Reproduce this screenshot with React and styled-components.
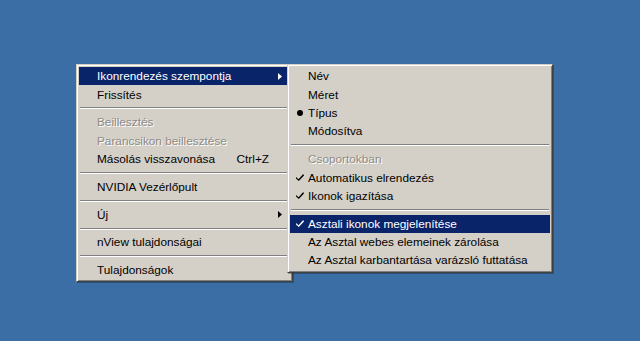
import React from "react";
import styled, { createGlobalStyle } from "styled-components";

const Global = createGlobalStyle`
  html, body { margin: 0; padding: 0; background: #3a6ea5; }
`;

const Desktop = styled.div`
  position: relative;
  width: 640px;
  height: 341px;
  background: #3a6ea5;
  overflow: hidden;
  font-family: "Liberation Sans", Arial, sans-serif;
  font-size: 11.8px;
`;

const Menu = styled.div`
  position: absolute;
  left: ${(p) => p.$x}px;
  top: ${(p) => p.$y}px;
  width: ${(p) => p.$w}px;
  box-sizing: border-box;
  background: #d4d0c8;
  border: 1px solid;
  border-color: #d4d0c8 #404040 #404040 #d4d0c8;
  box-shadow: inset 1px 1px #ffffff, inset -1px -1px #808080, 1px 1px 0 rgba(0,0,0,0.25);
  padding: 2px;
  display: flex;
  flex-direction: column;
`;

const Item = styled.div`
  display: flex;
  align-items: center;
  height: 18.4px;
  background: ${(p) => (p.$active ? "#0a246a" : "transparent")};
  color: ${(p) => (p.$active ? "#ffffff" : p.$disabled ? "#8d8b87" : "#000000")};
  text-shadow: ${(p) => (p.$disabled ? "1px 1px 0 #ffffff" : "none")};
  white-space: nowrap;
`;

const Mark = styled.span`
  width: 18px;
  flex: 0 0 18px;
  display: flex;
  justify-content: center;
  align-items: center;
  padding-left: 2px;
  box-sizing: border-box;
`;

const Label = styled.span`
  flex: 1;
`;

const Accel = styled.span`
  padding-left: 20px;
`;

const ArrowSlot = styled.span`
  width: 21px;
  flex: 0 0 21px;
  display: flex;
  justify-content: center;
  align-items: center;
  padding-left: 1px;
  box-sizing: border-box;
`;

const Separator = styled.div`
  height: 9.4px;
  display: flex;
  flex-direction: column;
  justify-content: center;
  margin: 0 1px;
  &::before {
    content: "";
    height: 1px;
    background: #808080;
  }
  &::after {
    content: "";
    height: 1px;
    background: #ffffff;
  }
`;

const Check = ({ color }) => (
  <svg width="8" height="7" viewBox="0 0 8 7">
    <path d="M0 3 L2.6 5.2 L7.2 0 L8 1.6 L2.8 7 L0 4.6 Z" fill={color} />
  </svg>
);

const Bullet = ({ color }) => (
  <svg width="6" height="6" viewBox="0 0 6 6">
    <circle cx="3" cy="3" r="3" fill={color} />
  </svg>
);

const Arrow = ({ color }) => (
  <svg width="4" height="7" viewBox="0 0 4 7">
    <polygon points="0,0 4,3.5 0,7" fill={color} />
  </svg>
);

const MenuItem = ({ label, active, disabled, mark, accel, sub }) => {
  const c = active ? "#ffffff" : "#000000";
  return (
    <Item $active={active} $disabled={disabled}>
      <Mark>
        {mark === "check" && <Check color={c} />}
        {mark === "bullet" && <Bullet color={c} />}
      </Mark>
      <Label>{label}</Label>
      {accel && <Accel>{accel}</Accel>}
      <ArrowSlot>{sub && <Arrow color={c} />}</ArrowSlot>
    </Item>
  );
};

const mainItems = [
  { label: "Ikonrendezés szempontja", active: true, sub: true },
  { label: "Frissítés" },
  "sep",
  { label: "Beillesztés", disabled: true },
  { label: "Parancsikon beillesztése", disabled: true },
  { label: "Másolás visszavonása", accel: "Ctrl+Z" },
  "sep",
  { label: "NVIDIA Vezérlőpult" },
  "sep",
  { label: "Új", sub: true },
  "sep",
  { label: "nView tulajdonságai" },
  "sep",
  { label: "Tulajdonságok" },
];

const subItems = [
  { label: "Név" },
  { label: "Méret" },
  { label: "Típus", mark: "bullet" },
  { label: "Módosítva" },
  "sep",
  { label: "Csoportokban", disabled: true },
  { label: "Automatikus elrendezés", mark: "check" },
  { label: "Ikonok igazítása", mark: "check" },
  "sep",
  { label: "Asztali ikonok megjelenítése", mark: "check", active: true },
  { label: "Az Asztal webes elemeinek zárolása" },
  { label: "Az Asztal karbantartása varázsló futtatása" },
];

const renderItems = (items) =>
  items.map((it, i) =>
    it === "sep" ? <Separator key={i} /> : <MenuItem key={i} {...it} />
  );

export default function App() {
  return (
    <>
      <Global />
      <Desktop>
        <Menu $x={76} $y={64} $w={217}>
          {renderItems(mainItems)}
        </Menu>
        <Menu $x={287} $y={64} $w={266}>
          {renderItems(subItems)}
        </Menu>
      </Desktop>
    </>
  );
}
